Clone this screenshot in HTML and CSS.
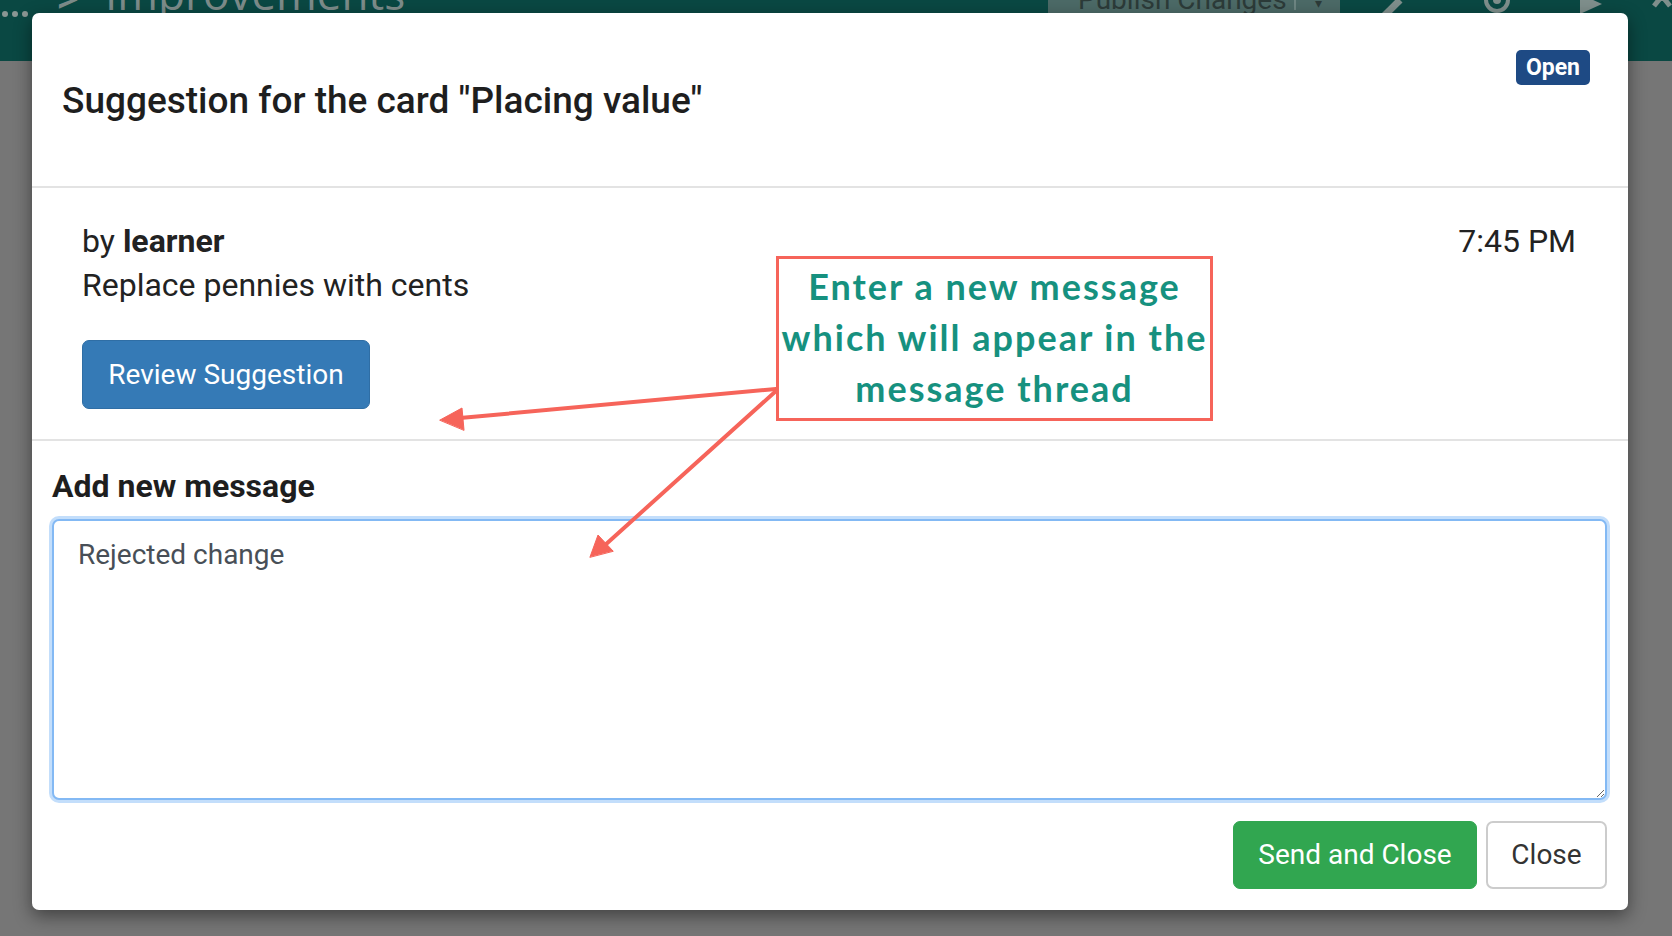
FILE: index.html
```html
<!DOCTYPE html>
<html lang="en">
<head>
<meta charset="utf-8">
<title>Suggestion</title>
<link rel="stylesheet" href="styles.css">
</head>
<body>
<div class="app">
  <header class="topbar">
    <svg class="dots" width="34" height="20" viewBox="0 0 34 20"><circle cx="5" cy="14" r="3" fill="#8a9693"/><circle cx="15" cy="14" r="3" fill="#8a9693"/><circle cx="25" cy="14" r="3" fill="#8a9693"/></svg>
    <span class="crumb-sep">&gt;</span>
    <span class="crumb">Improvements</span>
    <span class="spacer"></span>
    <div class="publish">
      <span class="publish-label">Publish Changes</span>
      <span class="publish-caret">▾</span>
    </div>
    <svg class="tb-icon pencil" width="40" height="20" viewBox="0 0 40 20"><path d="M6 20 L26 0" stroke="#7f8f8c" stroke-width="7"/></svg>
    <svg class="tb-icon target" width="34" height="20" viewBox="0 0 34 20"><circle cx="17" cy="0" r="11" fill="none" stroke="#7f8f8c" stroke-width="4"/><circle cx="17" cy="0" r="4" fill="#7f8f8c"/></svg>
    <svg class="tb-icon play" width="30" height="20" viewBox="0 0 30 20"><path d="M4 -6 L26 4 L4 14 Z" fill="#7f8f8c"/></svg>
    <svg class="tb-icon gear" width="20" height="20" viewBox="0 0 20 20"><path d="M2 6 L10 -4 L18 6" fill="none" stroke="#7f8f8c" stroke-width="5"/></svg>
  </header>
  <main class="page"></main>

  <div class="modal">
    <div class="modal-header">
      <h4 class="modal-title">Suggestion for the card "Placing value"</h4>
      <span class="badge">Open</span>
    </div>
    <div class="modal-section suggestion">
      <div class="meta">
        <span class="author">by <b>learner</b></span>
        <span class="time">7:45 PM</span>
      </div>
      <div class="summary">Replace pennies with cents</div>
      <button class="btn btn-primary">Review Suggestion</button>
    </div>
    <div class="modal-section reply">
      <div class="label">Add new message</div>
      <textarea class="message">Rejected change</textarea>
      <div class="actions">
        <button class="btn btn-success">Send and Close</button>
        <button class="btn btn-default">Close</button>
      </div>
    </div>
  </div>

  <div class="callout">Enter a new message which will appear in the message thread</div>
  <svg class="arrows" width="1672" height="936" viewBox="0 0 1672 936">
    <g stroke="#f6645a" stroke-width="4" fill="#f6645a" stroke-linecap="round">
      <line x1="776" y1="389" x2="460" y2="418"/>
      <path d="M440 420 L462 408 L464 430 Z" stroke-width="1"/>
      <line x1="776" y1="391" x2="604" y2="546"/>
      <path d="M590 557 L598 535 L613 551 Z" stroke-width="1"/>
    </g>
  </svg>
</div>
</body>
</html>
```

FILE: styles.css
```css
* { box-sizing: border-box; }

html, body {
  margin: 0;
  padding: 0;
}

body {
  width: 1672px;
  height: 936px;
  overflow: hidden;
  background: #767676;
  font-family: Roboto, "Liberation Sans", Arial, sans-serif;
  color: #212121;
}

.app {
  position: relative;
  width: 1672px;
  height: 936px;
  display: flex;
  flex-direction: column;
}

/* dimmed background app chrome */
.topbar {
  height: 61px;
  flex: none;
  background: #0a4843;
  display: flex;
  align-items: flex-start;
  overflow: hidden;
  color: #80908d;
}

.dots {
  flex: none;
  margin-left: 0;
}

.crumb-sep {
  font-size: 44px;
  line-height: 1;
  margin: -24px 0 0 22px;
  color: #7d8c8a;
}

.crumb {
  font-family: "Open Sans", sans-serif;
  font-size: 44px;
  line-height: 1;
  margin: -29px 0 0 26px;
  color: #7d8c8a;
}

.spacer { flex: 1; }

.publish {
  width: 292px;
  height: 20px;
  background: #4c6a67;
  display: flex;
  align-items: flex-start;
  margin-right: 34px;
}

.publish-label {
  font-size: 28px;
  line-height: 1;
  color: #2c3b39;
  margin: -14px 0 0 30px;
  flex: 1;
}

.publish-caret {
  width: 46px;
  border-left: 2px solid #6e8683;
  height: 14px;
  text-align: center;
  font-size: 14px;
  line-height: 1;
  color: #2c3b39;
  margin-top: -4px;
}

.tb-icon { flex: none; }
.pencil { margin-right: 66px; }
.target { margin-right: 62px; }
.play { margin-right: 46px; }
.gear { margin-right: 0; }

.page {
  flex: 1;
  background: #767676;
}

/* modal */
.modal {
  position: absolute;
  left: 32px;
  top: 13px;
  width: 1596px;
  background: #fff;
  border-radius: 7px;
  box-shadow: 0 6px 18px rgba(0, 0, 0, 0.45);
}

.modal-header {
  height: 175px;
  border-bottom: 2px solid #e3e3e3;
  display: flex;
  justify-content: space-between;
  align-items: flex-start;
  padding: 0 38px 0 30px;
}

.modal-title {
  margin: 66px 0 0;
  font-size: 37px;
  line-height: 1.2;
  font-weight: 500;
  color: #1e1e1e;
}

.badge {
  margin-top: 37px;
  background: #1e4a84;
  color: #fff;
  font-weight: 700;
  font-size: 23px;
  line-height: 23px;
  padding: 6px 10px;
  border-radius: 5px;
}

.modal-section.suggestion {
  padding: 32px 52px 30px 50px;
  border-bottom: 2px solid #e3e3e3;
  font-size: 32px;
  line-height: 42px;
  color: #222;
}

.summary { margin-top: 2px; }

.meta {
  display: flex;
  justify-content: space-between;
}

.author b { font-weight: 700; }

.btn {
  font-family: Roboto, "Liberation Sans", Arial, sans-serif;
  font-size: 28px;
  line-height: 40px;
  padding: 13px 26px;
  border: 1px solid transparent;
  border-radius: 7px;
  cursor: pointer;
}

.btn-primary {
  margin-top: 34px;
  display: block;
  width: 288px;
  height: 69px;
  padding: 0;
  background: #357ab6;
  border-color: #2f6ea5;
  color: #fff;
}

.modal-section.reply {
  padding: 27px 21px 21px 20px;
}

.label {
  font-size: 32px;
  line-height: 36px;
  font-weight: 700;
  color: #1e1e1e;
}

.message {
  display: block;
  margin-top: 15px;
  width: 100%;
  height: 281px;
  padding: 14px 24px;
  font-family: Roboto, "Liberation Sans", Arial, sans-serif;
  font-size: 28px;
  line-height: 40px;
  color: #484f57;
  border: 2px solid #83b9f4;
  border-radius: 7px;
  box-shadow: 0 0 0 3px #c3defb;
  outline: none;
}

.actions {
  margin-top: 21px;
  display: flex;
  justify-content: flex-end;
  gap: 9px;
}

.btn-success {
  width: 244px;
  height: 68px;
  padding: 0;
  background: #31a650;
  border-color: #31a650;
  color: #fff;
}

.btn-default {
  width: 121px;
  height: 68px;
  padding: 0;
  background: #fff;
  border: 2px solid #cccccc;
  color: #333;
}

/* annotation overlay */
.callout {
  position: absolute;
  left: 776px;
  top: 256px;
  width: 437px;
  height: 165px;
  border: 3px solid #f6645a;
  background: #fff;
  padding-top: 2px;
  text-align: center;
  font-family: Lato, "Open Sans", sans-serif;
  font-weight: 700;
  font-size: 36px;
  line-height: 51px;
  letter-spacing: 2px;
  color: #16917f;
}

.arrows {
  position: absolute;
  left: 0;
  top: 0;
  pointer-events: none;
}
```
